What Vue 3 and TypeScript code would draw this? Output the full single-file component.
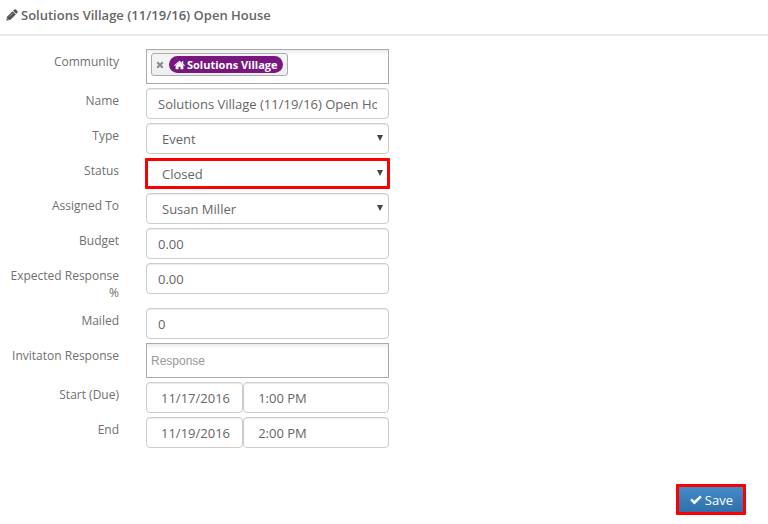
<script setup lang="ts">
import { ref } from 'vue'

const name = ref('Solutions Village (11/19/16) Open House')
const type = ref('Event')
const status = ref('Closed')
const assignedTo = ref('Susan Miller')
const budget = ref('0.00')
const expected = ref('0.00')
const mailed = ref('0')
const response = ref('')
const startDate = ref('11/17/2016')
const startTime = ref('1:00 PM')
const endDate = ref('11/19/2016')
const endTime = ref('2:00 PM')
const communities = ref<string[]>(['Solutions Village'])

function removeCommunity(index: number) {
  communities.value.splice(index, 1)
}
</script>

<template>
  <main class="page">
    <header class="header">
      <svg class="pencil" viewBox="0 0 12 12" aria-hidden="true">
        <path d="M0.4 11.6 1 7.8 6.6 2.2 9.8 5.4 4.2 11z" fill="#555" />
        <path d="M7.1 1.7 8.4 0.6Q9.2 0 9.9 0.6L11.4 2.1Q12 2.8 11.4 3.6L10.3 4.9z" fill="#555" />
        <path d="M3.2 7.6 6.8 4.2" stroke="#bbb" stroke-width="0.6" fill="none" />
        <path d="M1.3 9.4 2.6 10.7" stroke="#fff" stroke-width="0.6" fill="none" />
      </svg>
      <h1>Solutions Village (11/19/16) Open House</h1>
    </header>

    <form class="form" @submit.prevent>
      <div class="row">
        <span id="community-label" class="label">Community</span>
        <div class="tags" role="group" aria-labelledby="community-label">
          <span v-for="(item, i) in communities" :key="item" class="tag">
            <button type="button" class="remove" aria-label="Remove" @click="removeCommunity(i)">
              <svg viewBox="0 0 8 8"><path d="M1.2 1.2 6.8 6.8M6.8 1.2 1.2 6.8" stroke="#888" stroke-width="2" /></svg>
            </button>
            <span class="pill">
              <svg viewBox="0 0 12 10" aria-hidden="true">
                <path d="M6 0.3 8.6 2.6V1H10.1V3.9L11.9 5.4 11.2 6.2 6 1.8 0.8 6.2 0.1 5.4z" fill="#fff" />
                <path d="M6 1.8 10.2 5.4V9.5H7.1V6.8H4.9V9.5H1.8V5.4z" fill="#fff" />
              </svg>
              {{ item }}
            </span>
          </span>
        </div>
      </div>
      <div class="row">
        <label class="label" for="name">Name</label>
        <input id="name" v-model="name" class="control" type="text" />
      </div>
      <div class="row">
        <label class="label" for="type">Type</label>
        <div class="select">
          <select id="type" v-model="type" class="control indent"><option>Event</option></select>
          <svg class="arrow" viewBox="0 0 6 6" aria-hidden="true"><path d="M0 0H6L3 6z" fill="#444" /></svg>
        </div>
      </div>
      <div class="row">
        <label class="label" for="status">Status</label>
        <div class="select highlight">
          <select id="status" v-model="status" class="control indent"><option>Closed</option></select>
          <svg class="arrow" viewBox="0 0 6 6" aria-hidden="true"><path d="M0 0H6L3 6z" fill="#444" /></svg>
        </div>
      </div>
      <div class="row">
        <label class="label" for="assigned">Assigned To</label>
        <div class="select">
          <select id="assigned" v-model="assignedTo" class="control indent"><option>Susan Miller</option></select>
          <svg class="arrow" viewBox="0 0 6 6" aria-hidden="true"><path d="M0 0H6L3 6z" fill="#444" /></svg>
        </div>
      </div>
      <div class="row">
        <label class="label" for="budget">Budget</label>
        <input id="budget" v-model="budget" class="control" type="text" />
      </div>
      <div class="row">
        <label class="label" for="expected">Expected Response %</label>
        <input id="expected" v-model="expected" class="control" type="text" />
      </div>
      <div class="row">
        <label class="label" for="mailed">Mailed</label>
        <input id="mailed" v-model="mailed" class="control" type="text" />
      </div>
      <div class="row">
        <label class="label" for="response">Invitaton Response</label>
        <input id="response" v-model="response" class="response" type="text" placeholder="Response" />
      </div>
      <div class="row">
        <label class="label" for="start">Start (Due)</label>
        <div class="pair">
          <input id="start" v-model="startDate" class="control date" type="text" />
          <input v-model="startTime" class="control date" type="text" aria-label="Start time" />
        </div>
      </div>
      <div class="row">
        <label class="label" for="end">End</label>
        <div class="pair">
          <input id="end" v-model="endDate" class="control date" type="text" />
          <input v-model="endTime" class="control date" type="text" aria-label="End time" />
        </div>
      </div>

      <div class="actions">
        <button type="submit" class="save">
          <svg viewBox="0 0 12 10" aria-hidden="true">
            <path d="M0.2 5.2 2 3.4 4.4 5.8 10 0.4 11.8 2.2 4.4 9.5z" fill="#fff" />
          </svg>
          Save
        </button>
      </div>
    </form>
  </main>
</template>

<style>
body {
  margin: 0;
  background: #fff;
}
</style>

<style scoped>
.page,
.page input,
.page select,
.page button {
  font-family: 'Open Sans', sans-serif;
  box-sizing: border-box;
}
.page {
  color: #707070;
  font-size: 12px;
}
.header {
  display: flex;
  align-items: center;
  gap: 3px;
  padding: 6px 6px 10px;
  border-bottom: 2px solid #e7ebf0;
}
.pencil {
  width: 12px;
  height: 12px;
}
h1 {
  margin: 0;
  color: #666;
  font-size: 13px;
  line-height: 18px;
  font-weight: 600;
}
.form {
  display: flex;
  flex-direction: column;
  gap: 4px;
  padding-top: 13px;
}
.row {
  display: grid;
  grid-template-columns: 119px minmax(0, 243px);
  column-gap: 27px;
  align-items: start;
}
.label {
  padding: 4px 0 3px 10px;
  line-height: 17px;
  text-align: right;
}
.control {
  display: block;
  width: 100%;
  min-width: 0;
  height: 31px;
  margin: 0;
  padding: 0 11px;
  border: 1px solid #ccc;
  border-radius: 4px;
  background: #fff;
  color: #666;
  font-size: 13px;
  box-shadow: inset 0 1px 1px rgba(0, 0, 0, 0.08);
  outline: none;
}
.indent {
  appearance: none;
  padding-left: 15px;
}
.date {
  padding: 0 0 0 14px;
}
.select {
  position: relative;
}
.arrow {
  position: absolute;
  top: 12px;
  right: 6px;
  width: 6px;
  height: 6px;
  pointer-events: none;
}
.highlight::after {
  content: '';
  position: absolute;
  inset: 0 -1px;
  border: 3px solid #f00;
  border-radius: 1px;
  pointer-events: none;
}
.tags,
.response {
  width: 100%;
  height: 35px;
  padding: 3px 4px;
  border: 1px solid #aaa;
  background: linear-gradient(#eee 1%, #fff 15%);
  box-sizing: border-box;
}
.response {
  margin: 0;
  border-radius: 0;
  color: #666;
  outline: none;
}
.page .response {
  font-family: 'Liberation Sans', sans-serif;
  font-size: 12px;
}
.response::placeholder {
  color: #999;
}
.tags {
  display: flex;
  align-items: flex-start;
}
.tag {
  display: flex;
  align-items: center;
  gap: 5px;
  height: 23px;
  padding: 0 4px;
  border: 1px solid #aaa;
  border-radius: 3px;
  background: linear-gradient(#f4f4f4 20%, #eee);
  box-sizing: border-box;
}
.remove {
  display: flex;
  padding: 0;
  border: 0;
  background: none;
}
.remove svg {
  width: 8px;
  height: 8px;
}
.pill {
  display: flex;
  align-items: center;
  gap: 2px;
  padding: 0 5px;
  border-radius: 9px;
  background: #77177f;
  color: #fff;
  font-size: 11px;
  font-weight: 700;
  line-height: 17px;
  white-space: nowrap;
}
.pill svg {
  width: 11px;
  height: 10px;
}
.pair {
  display: grid;
  grid-template-columns: 2fr 3fr;
}
.actions {
  display: flex;
  justify-content: flex-end;
  padding: 32px 22px 9px 0;
}
.save {
  display: flex;
  align-items: center;
  gap: 3px;
  height: 31px;
  padding: 0 10px 0 11px;
  border: 3px solid #f00;
  border-radius: 1px;
  background: linear-gradient(#428bca, #3071a9);
  color: #fff;
  font-size: 13px;
}
.save svg {
  width: 12px;
  height: 10px;
}
</style>
